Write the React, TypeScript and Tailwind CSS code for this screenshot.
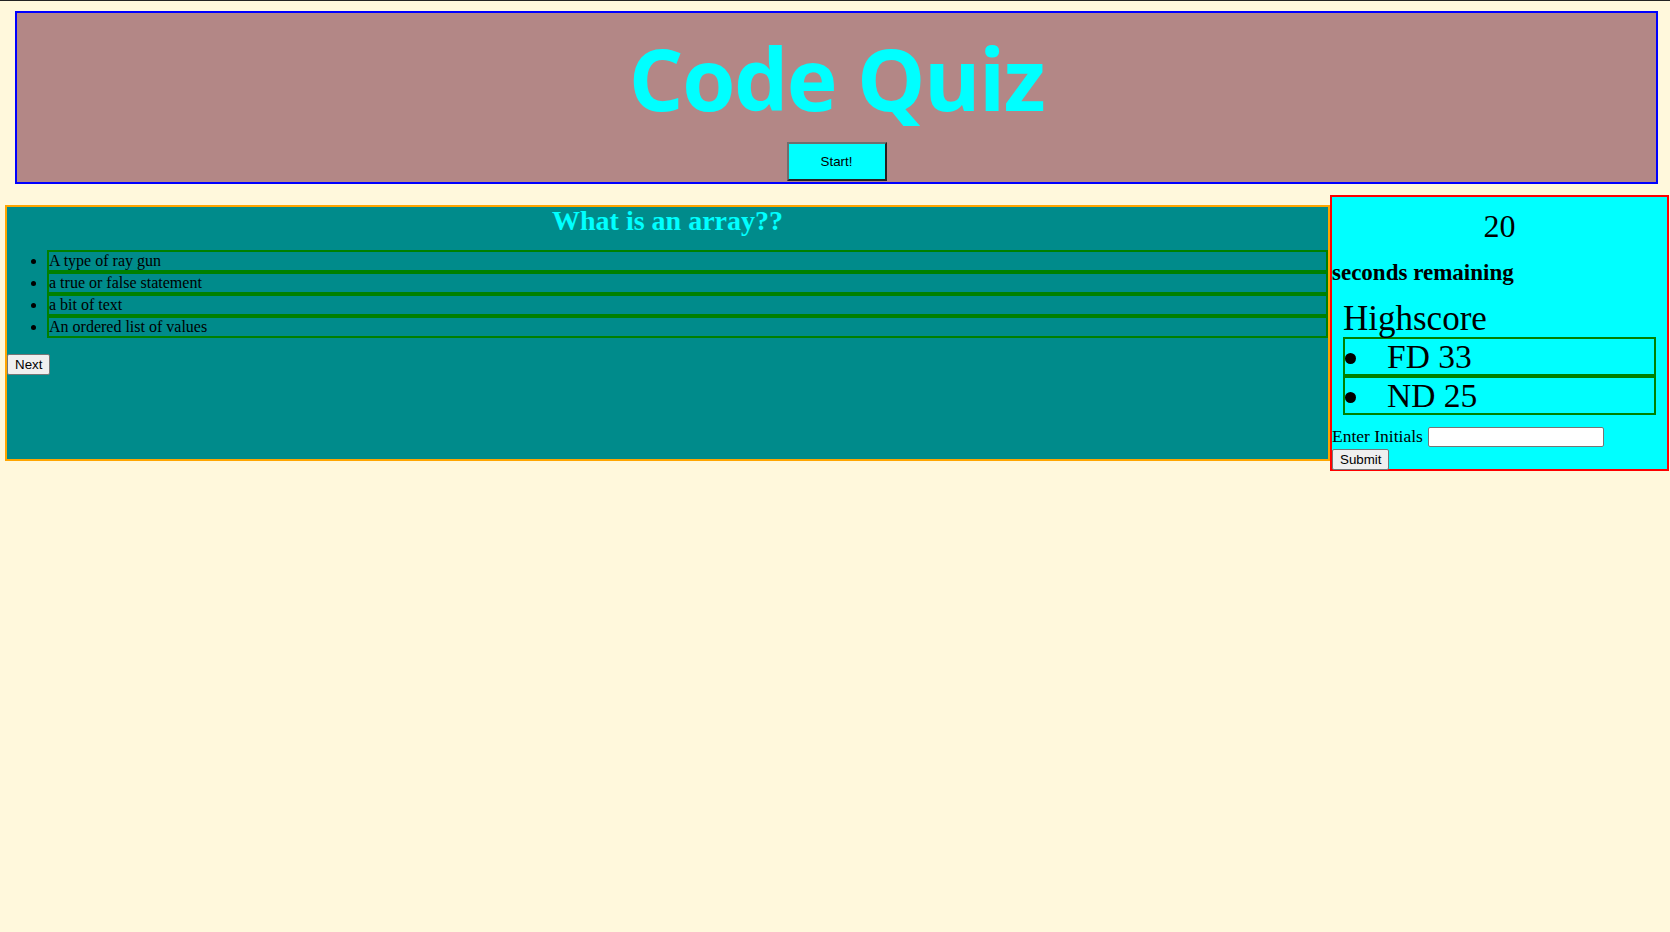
export default function App() {
  const answers = [
    "A type of ray gun",
    "a true or false statement",
    "a bit of text",
    "An ordered list of values",
  ];
  const scores = ["FD 33", "ND 25"];

  return (
    <div className="min-h-screen bg-[#fff8dc] font-['Liberation_Serif',serif] text-black">
      <div className="h-px bg-[#222222]"></div>

      {/* header */}
      <header className="ml-[15px] mr-[12px] mt-[10px] h-[173px] border-2 border-[#0000ff] bg-[#b38786] flex flex-col items-center">
        <h1 className="mt-[15px] h-[100px] text-[86px] leading-[100px] font-bold tracking-[-1.5px] text-[#00ffff] font-['Open_Sans',sans-serif]">
          Code Quiz
        </h1>
        <button className="mt-[14px] w-[100px] h-[39px] bg-[#00ffff] border-2 border-t-[#6f6f6f] border-l-[#6f6f6f] border-r-[#222222] border-b-[#222222] text-[13.33px] font-['Liberation_Sans',sans-serif]">
          Start!
        </button>
      </header>

      <div className="flex items-start">
        {/* question card */}
        <div className="ml-[5px] mt-[21px] w-[1325px] h-[256px] border-2 border-[#ffa500] bg-[#008b8b]">
          <h2 className="text-center text-[28px] leading-[28px] font-bold text-[#00ffff]">
            What is an array??
          </h2>
          <ul className="mt-[15px] mb-[14px] pl-[40px] list-disc">
            {answers.map((a, i) => (
              <li key={i} className="h-[22px] border-2 border-[#008000] text-[16px] leading-[18px]">
                {a}
              </li>
            ))}
          </ul>
          <button className="h-[21px] px-[7px] bg-[#efefef] border border-[#767676] rounded-[2px] text-[13.33px] leading-[19px] font-['Liberation_Sans',sans-serif]">
            Next
          </button>
        </div>

        {/* timer + highscores */}
        <div className="mt-[11px] w-[339px] h-[276px] border-2 border-[#ff0000] bg-[#00ffff]">
          <div className="mt-[13px] text-center text-[32px] leading-[32px]">20</div>
          <div className="mt-[18px] text-[23px] leading-[26px] font-bold">seconds remaining</div>
          <div className="mx-[11px]">
            <div className="mt-[15px] text-[35px] leading-[36px]">Highscore</div>
            <ul>
              {scores.map((s, i) => (
                <li key={i} className="h-[39px] border-2 border-[#008000] flex items-start text-[33.5px] leading-[35px]">
                  <span className="mt-[14px] w-[11px] h-[11px] rounded-full bg-black shrink-0"></span>
                  <span className="ml-[31px]">{s}</span>
                </li>
              ))}
            </ul>
          </div>
          <div className="mt-[11px] h-[21px] flex items-end gap-[5px]">
            <label className="text-[17.5px] leading-[20px] pb-px">Enter Initials</label>
            <input className="w-[176px] h-[20px] bg-white border border-[#767676] rounded-[2px]" />
          </div>
          <button className="h-[21px] px-[7px] bg-[#efefef] border border-[#767676] rounded-[2px] text-[13.33px] leading-[19px] font-['Liberation_Sans',sans-serif]">
            Submit
          </button>
        </div>
      </div>
    </div>
  );
}
